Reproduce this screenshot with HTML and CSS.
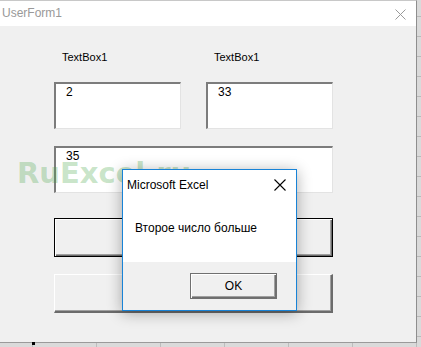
FILE: index.html
```html
<!DOCTYPE html>
<html>
<head>
<meta charset="utf-8">
<link rel="stylesheet" href="styles.css">
</head>
<body>
<div class="screen">
  <div class="form">
    <div class="titlebar">
      <span class="title">UserForm1</span>
      <svg class="close" width="11" height="11" viewBox="0 0 11 11"><path d="M0.5 0.5L10.5 10.5M10.5 0.5L0.5 10.5" stroke="#9a9a9a" stroke-width="1" fill="none"/></svg>
    </div>
    <div class="client">
      <div class="labels"><span class="lbl">TextBox1</span><span class="lbl">TextBox1</span></div>
      <div class="row">
        <div class="tb">2</div>
        <div class="tb">33</div>
      </div>
      <div class="tb wide">35</div>
      <div class="btn default"></div>
      <div class="btn"></div>
      <div class="watermark">RuExcel.ru</div>
      <div class="msgbox">
        <div class="mb-title">
          <span>Microsoft Excel</span>
          <svg class="mb-close" width="12" height="12" viewBox="0 0 12 12"><path d="M0.5 0.5L11.5 11.5M11.5 0.5L0.5 11.5" stroke="#000" stroke-width="1.1" fill="none"/></svg>
        </div>
        <div class="mb-body">Второе число больше</div>
        <div class="mb-footer"><div class="ok">OK</div></div>
      </div>
    </div>
  </div>
  <span class="mark"></span>
</div>
</body>
</html>
```

FILE: styles.css
```css
* { box-sizing: border-box; }
html, body { margin: 0; padding: 0; }
body { font-family: "Liberation Sans", Arial, sans-serif; }

.screen {
  position: relative;
  width: 421px;
  height: 347px;
  overflow: hidden;
  background-color: #dadada;
  background-image:
    repeating-linear-gradient(to bottom, transparent 0 16px, #b9b9b9 16px 17px, transparent 17px 20px),
    repeating-linear-gradient(to right, transparent 0 32px, #bdbdbd 32px 33px, transparent 33px 64px);
}

.form {
  width: 417px;
  height: 343px;
  background: #f0f0f0;
  border-top: 1px solid #c8c8c8;
  border-right: 1px solid #8e8e8e;
  border-bottom: 1px solid #9a9a9a;
  display: flex;
  flex-direction: column;
}

.titlebar {
  height: 25px;
  background: #fff;
  display: flex;
  align-items: center;
  justify-content: space-between;
  padding: 0 10px 0 2px;
  flex-shrink: 0;
}
.title { font-size: 12px; color: #999; line-height: 25px; }
.close { display: block; margin-top: 1px; }

.client {
  position: relative;
  flex: 1;
  padding: 24px 0 0 54px;
  font-size: 11px;
  color: #000;
}

.labels { display: flex; gap: 25px; height: 14px; line-height: 14px; }
.lbl { width: 127px; padding-left: 8px; }

.row { display: flex; gap: 25px; margin-top: 18px; }

.tb {
  width: 127px;
  height: 47px;
  background: #fff;
  border-style: solid;
  border-width: 2px 1px 1px 2px;
  border-color: #7c7c7c #e3e3e3 #e3e3e3 #7c7c7c;
  padding: 2px 0 0 10px;
  line-height: 13px;
  font-size: 12px;
}
.tb.wide { width: 279px; margin-top: 17px; }

.btn {
  width: 279px;
  height: 39px;
  margin-top: 17px;
  background: #f0f0f0;
  border-style: solid;
  border-width: 1px 2px 2px 1px;
  border-color: #fff #6b6b6b #6b6b6b #fff;
  box-shadow: inset -1px -1px 0 #a0a0a0;
}
.btn.default {
  margin-top: 25px;
  border: 1px solid #000;
  box-shadow: inset 1px 1px 0 #fff, inset -1px -1px 0 #6b6b6b, inset -2px -2px 0 #a0a0a0;
}

.watermark {
  position: absolute;
  left: 17px;
  top: 133px;
  font-family: "DejaVu Sans", Verdana, sans-serif;
  font-weight: bold;
  font-size: 29px;
  line-height: 29px;
  color: rgba(70, 165, 70, 0.3);
  white-space: nowrap;
}

.msgbox {
  position: absolute;
  left: 122px;
  top: 143px;
  width: 175px;
  height: 142px;
  border: 1px solid #1883d7;
  background: #fff;
  box-shadow: 0 2px 14px rgba(0, 0, 0, 0.32);
  display: flex;
  flex-direction: column;
  font-size: 12px;
  color: #000;
}
.mb-title {
  height: 28px;
  display: flex;
  align-items: center;
  justify-content: space-between;
  padding: 2px 10px 0 4px;
}
.mb-close { display: block; }
.mb-body {
  height: 64px;
  padding: 23px 0 0 12px;
  line-height: 14px;
}
.mb-footer {
  flex: 1;
  background: #f0f0f0;
  display: flex;
  justify-content: flex-end;
  padding: 11px 19px 0 0;
}
.ok {
  width: 87px;
  height: 26px;
  border: 1px solid #707070;
  box-shadow: inset 1px 1px 0 #fff, inset -1px -1px 0 #6e6e6e, inset -2px -2px 0 #a0a0a0;
  background: #f0f0f0;
  text-align: center;
  line-height: 24px;
  font-size: 12px;
}

.mark {
  position: absolute;
  left: 32px;
  top: 342px;
  width: 3px;
  height: 3px;
  background: #000;
}
```
